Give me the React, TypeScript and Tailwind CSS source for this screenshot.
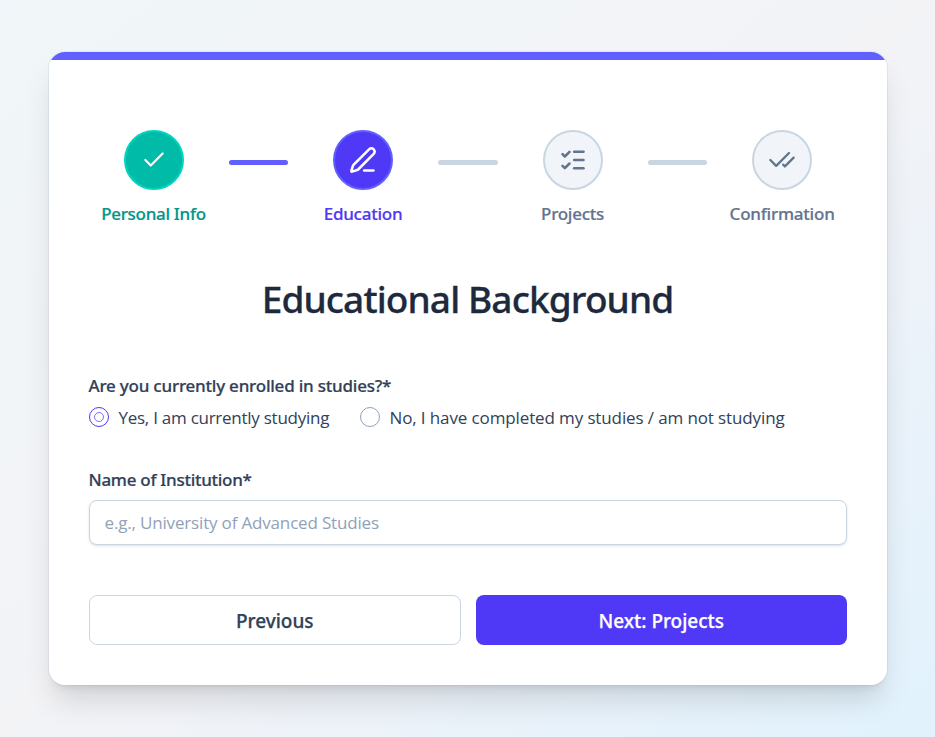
import { Fragment } from 'react';
import { Check, CheckCheck, ListChecks, PenLine } from 'lucide-react';

const steps = [
  {
    label: 'Personal Info',
    icon: <Check size={26} strokeWidth={2} />,
    circle: 'border-[#00d5be] bg-[#00bba7] text-white',
    text: 'text-[#009689] tracking-[-0.3px]',
    line: 'bg-[#615fff]',
  },
  {
    label: 'Education',
    icon: <PenLine size={28} strokeWidth={2.2} />,
    circle: 'border-[#615fff] bg-[#4f39f6] text-white',
    text: 'text-[#4f39f6] tracking-[-0.25px]',
    line: 'bg-[#cad5e2]',
  },
  {
    label: 'Projects',
    icon: <ListChecks size={28} strokeWidth={2.2} />,
    circle: 'border-[#cad5e2] bg-[#f1f5f9] text-[#62748e]',
    text: 'text-[#62748e] tracking-[-0.25px]',
    line: 'bg-[#cad5e2]',
  },
  {
    label: 'Confirmation',
    icon: <CheckCheck size={28} strokeWidth={2} />,
    circle: 'border-[#cad5e2] bg-[#f1f5f9] text-[#62748e]',
    text: 'text-[#62748e] tracking-[-0.22px]',
    line: '',
  },
];

export default function App() {
  return (
    <div className="flex h-[737px] justify-center bg-linear-to-br from-[#f0f6f9] via-[#f3f3f6] to-[#e1f2fd] pt-[52px] font-['Noto_Sans',sans-serif]">
      <main className="h-[633px] w-[838px] overflow-hidden rounded-2xl bg-white shadow-[0_0_0_1px_rgba(144,161,185,0.15),0_20px_30px_-5px_rgba(0,0,0,0.13),0_8px_10px_-6px_rgba(0,0,0,0.1)]">
        <div className="h-2 bg-[#615fff]" />
        <div className="px-10 pt-[70px]">
          <div className="-mr-[0.6px] flex items-start gap-[10px]">
            {steps.map((s) => (
              <Fragment key={s.label}>
                <div className="flex w-[130px] shrink-0 flex-col items-center">
                  <div className={`flex size-[60px] items-center justify-center rounded-full border-2 ${s.circle}`}>
                    {s.icon}
                  </div>
                  <span className={`mt-3 text-[17px] leading-6 font-medium whitespace-nowrap [-webkit-text-stroke:0.2px] ${s.text}`}>{s.label}</span>
                </div>
                {s.line && <div className={`mt-[30px] h-[5px] flex-1 rounded-full ${s.line}`} />}
              </Fragment>
            ))}
          </div>

          <h1 className="mt-[49px] text-center text-[37px] leading-[48px] font-medium tracking-[-0.87px] text-[#1d293d] [-webkit-text-stroke:0.3px]">
            Educational Background
          </h1>

          <p className="mt-[51px] text-[17px] leading-6 font-medium tracking-[-0.22px] text-[#314158] [-webkit-text-stroke:0.2px]">
            Are you currently enrolled in studies?*
          </p>
          <div className="mt-2 flex h-6 items-center font-['Open_Sans',sans-serif] text-[17px] leading-6 whitespace-nowrap text-[#314158]">
            <label className="flex w-[271px] items-center">
              <span className="mr-[10px] flex size-5 -translate-y-px items-center justify-center rounded-full border border-[#4f39f6]">
                <span className="size-[10px] rounded-full border border-[#7c6ff8]" />
              </span>
              <span className="tracking-[-0.26px]">Yes, I am currently studying</span>
            </label>
            <label className="flex items-center">
              <span className="mr-[10px] size-5 -translate-y-px rounded-full border border-[#90a1b9]" />
              <span className="tracking-[-0.12px]">No, I have completed my studies / am not studying</span>
            </label>
          </div>

          <p className="mt-[38px] text-[17px] leading-6 font-medium tracking-[-0.28px] text-[#314158] [-webkit-text-stroke:0.2px]">
            Name of Institution*
          </p>
          <input
            className="mt-2 block h-[45px] w-full rounded-lg border border-[#cad5e2] bg-white px-[15px] font-['Open_Sans',sans-serif] text-[17px] tracking-[-0.17px] shadow-sm placeholder:text-[#90a1b9]"
            placeholder="e.g., University of Advanced Studies"
          />

          <div className="mt-[50px] flex gap-[15px] text-[19px] font-medium tracking-[-0.03px] [-webkit-text-stroke:0.25px]">
            <button className="h-[50px] flex-1 rounded-lg border border-[#cad5e2] bg-white pt-0.5 text-[#314158]">Previous</button>
            <button className="h-[50px] flex-1 rounded-lg bg-[#4f39f6] pt-0.5 text-white">Next: Projects</button>
          </div>
        </div>
      </main>
    </div>
  );
}
